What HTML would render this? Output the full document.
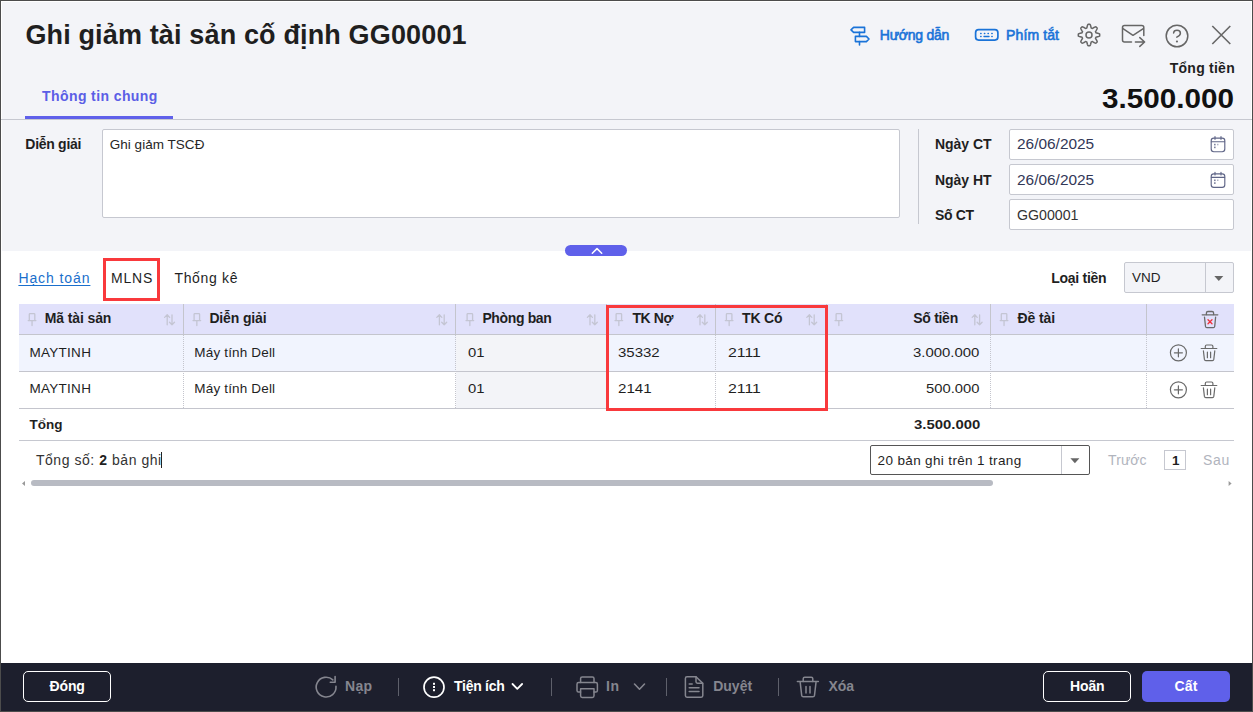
<!DOCTYPE html>
<html><head><meta charset="utf-8"><style>
*{box-sizing:border-box;margin:0;padding:0}
html,body{width:1253px;height:712px;overflow:hidden;background:#fff;font-family:"Liberation Sans",sans-serif}
.a{position:absolute}
.t{position:absolute;white-space:pre}
.t b{font-weight:700;color:#1f1f1f}
</style></head><body>
<div class="a" style="left:0px;top:0px;width:1253px;height:712px;border:1px solid #4c4c4c;"></div><div class="a" style="left:1px;top:1px;width:1251px;height:250px;background:#fff;"></div><div class="a" style="left:2px;top:2px;width:1249px;height:249px;background:#f3f4f8;"></div><div class="a" style="left:1px;top:119px;width:1251px;height:1px;background:#c6c8d0;"></div><div class="a" style="left:25px;top:116px;width:148px;height:3px;background:#5f60ea;"></div><div class="a" style="left:102px;top:129px;width:798px;height:89px;background:#fff;border:1px solid #c6c8d0;border-radius:2px;"></div><div class="a" style="left:918px;top:129px;width:1px;height:95px;background:#c6c8d0;"></div><div class="a" style="left:1009px;top:129px;width:225px;height:31px;background:#fff;border:1px solid #c6c8d0;border-radius:2px;"></div><div class="a" style="left:1009px;top:164px;width:225px;height:31px;background:#fff;border:1px solid #c6c8d0;border-radius:2px;"></div><div class="a" style="left:1009px;top:199px;width:225px;height:31px;background:#fff;border:1px solid #c6c8d0;border-radius:2px;"></div><div class="a" style="left:565px;top:245px;width:62px;height:11px;background:#5f60ea;border-radius:6px;"></div><div class="a" style="left:103px;top:258px;width:57px;height:43px;border:3px solid #f9393c;"></div><div class="a" style="left:1124px;top:262px;width:110px;height:31px;background:#f3f4f8;border:1px solid #c6c8d0;border-radius:2px;"></div><div class="a" style="left:1205px;top:263px;width:1px;height:29px;background:#c6c8d0;"></div><div class="a" style="left:19px;top:304px;width:1215px;height:30px;background:#e1e1fb;"></div><div class="a" style="left:19px;top:334px;width:1215px;height:1px;background:#c4c5cd;"></div><div class="a" style="left:183px;top:304px;width:1px;height:30px;background:#c4c5cd;"></div><div class="a" style="left:455px;top:304px;width:1px;height:30px;background:#c4c5cd;"></div><div class="a" style="left:606px;top:304px;width:1px;height:30px;background:#c4c5cd;"></div><div class="a" style="left:715px;top:304px;width:1px;height:30px;background:#c4c5cd;"></div><div class="a" style="left:826px;top:304px;width:1px;height:30px;background:#c4c5cd;"></div><div class="a" style="left:990px;top:304px;width:1px;height:30px;background:#c4c5cd;"></div><div class="a" style="left:1146px;top:304px;width:1px;height:30px;background:#c4c5cd;"></div><div class="a" style="left:19px;top:335px;width:1215px;height:36px;background:#f1f4fe;"></div><div class="a" style="left:19px;top:371px;width:1215px;height:1px;background:#c4c5cd;"></div><div class="a" style="left:19px;top:372px;width:1215px;height:36px;background:#fff;"></div><div class="a" style="left:19px;top:408px;width:1215px;height:1px;background:#c4c5cd;"></div><div class="a" style="left:456px;top:335px;width:150px;height:36px;background:#f3f4f8;"></div><div class="a" style="left:456px;top:372px;width:150px;height:36px;background:#f3f4f8;"></div><div class="a" style="left:183px;top:335px;width:1px;height:73px;background-image:linear-gradient(to bottom,#c4c5cd 50%,transparent 50%);background-size:1px 2px;"></div><div class="a" style="left:455px;top:335px;width:1px;height:73px;background-image:linear-gradient(to bottom,#c4c5cd 50%,transparent 50%);background-size:1px 2px;"></div><div class="a" style="left:606px;top:335px;width:1px;height:73px;background-image:linear-gradient(to bottom,#c4c5cd 50%,transparent 50%);background-size:1px 2px;"></div><div class="a" style="left:715px;top:335px;width:1px;height:73px;background-image:linear-gradient(to bottom,#c4c5cd 50%,transparent 50%);background-size:1px 2px;"></div><div class="a" style="left:826px;top:335px;width:1px;height:73px;background-image:linear-gradient(to bottom,#c4c5cd 50%,transparent 50%);background-size:1px 2px;"></div><div class="a" style="left:990px;top:335px;width:1px;height:73px;background-image:linear-gradient(to bottom,#c4c5cd 50%,transparent 50%);background-size:1px 2px;"></div><div class="a" style="left:1146px;top:335px;width:1px;height:73px;background-image:linear-gradient(to bottom,#c4c5cd 50%,transparent 50%);background-size:1px 2px;"></div><div class="a" style="left:19px;top:440px;width:1215px;height:1px;background:#c6c8d0;"></div><div class="a" style="left:606px;top:305px;width:222px;height:106px;border:3px solid #f9393c;"></div><div class="a" style="left:870px;top:445px;width:220px;height:30px;background:#fff;border:1px solid #555;border-radius:2px;"></div><div class="a" style="left:1061px;top:446px;width:1px;height:28px;background:#c6c8d0;"></div><div class="a" style="left:1164px;top:450px;width:22px;height:20px;background:#fff;border:1px solid #c6c8d0;"></div><div class="a" style="left:161px;top:452px;width:1px;height:16px;background:#222;"></div><div class="a" style="left:31px;top:480px;width:962px;height:6px;background:#b8bbc3;border-radius:3px;"></div><div class="a" style="left:1px;top:663px;width:1251px;height:48px;background:#1d1f2d;"></div><div class="a" style="left:23px;top:671px;width:88px;height:31px;border:1px solid #fff;border-radius:5px;"></div><div class="a" style="left:1043px;top:671px;width:88px;height:31px;border:1px solid #fff;border-radius:5px;"></div><div class="a" style="left:1142px;top:671px;width:88px;height:31px;background:#5f60ea;border-radius:5px;"></div><div class="a" style="left:398px;top:678px;width:1px;height:18px;background:#5e606b;"></div><div class="a" style="left:551px;top:678px;width:1px;height:18px;background:#5e606b;"></div><div class="a" style="left:666px;top:678px;width:1px;height:18px;background:#5e606b;"></div><div class="a" style="left:778px;top:678px;width:1px;height:18px;background:#5e606b;"></div>
<svg class="a" style="left:0;top:0" width="1253" height="712" viewBox="0 0 1253 712" fill="none" stroke-linecap="round" stroke-linejoin="round">
<!-- signpost -->
<g stroke="#1a73d8" stroke-width="1.6">
<path d="M853.6 27.4 H864.6 V32.4 H853.6 L851 29.9 Z"/>
<path d="M855.4 36.4 H866.4 L869 39 L866.4 41.6 H855.4 Z"/>
<path d="M859.5 32.4 V36.4 M859.5 41.6 V45"/>
</g>
<!-- keyboard -->
<g stroke="#1a73d8">
<rect x="975.6" y="29.7" width="22.3" height="10.4" rx="3" stroke-width="1.7"/>
<g stroke-width="1.4"><path d="M980.7 33.5h.4M984.4 33.5h.4M988 33.5h.4M991.8 33.5h.4M980.7 36.5h.4M991.8 36.5h.4M984 36.5h5"/></g>
</g>
<!-- gear -->
<g stroke="#666666" stroke-width="1.5">
<path d="M1089.00 24.30 L1089.21 24.30 L1089.42 24.31 L1089.63 24.32 L1089.84 24.33 L1090.04 24.43 L1090.22 24.72 L1090.38 25.05 L1090.52 25.41 L1090.65 25.79 L1090.76 26.17 L1090.85 26.56 L1090.94 26.94 L1091.01 27.30 L1091.08 27.64 L1091.14 27.94 L1091.26 28.06 L1091.39 28.10 L1091.53 28.15 L1091.66 28.20 L1091.79 28.26 L1091.93 28.31 L1092.06 28.37 L1092.19 28.43 L1092.31 28.50 L1092.48 28.49 L1092.74 28.32 L1093.02 28.13 L1093.33 27.93 L1093.66 27.72 L1094.00 27.52 L1094.35 27.32 L1094.71 27.15 L1095.06 26.99 L1095.41 26.87 L1095.74 26.79 L1095.95 26.86 L1096.11 27.00 L1096.26 27.14 L1096.42 27.29 L1096.57 27.43 L1096.71 27.58 L1096.86 27.74 L1097.00 27.89 L1097.14 28.05 L1097.21 28.26 L1097.13 28.59 L1097.01 28.94 L1096.85 29.29 L1096.68 29.65 L1096.48 30.00 L1096.28 30.34 L1096.07 30.67 L1095.87 30.98 L1095.68 31.26 L1095.51 31.52 L1095.50 31.69 L1095.57 31.81 L1095.63 31.94 L1095.69 32.07 L1095.74 32.21 L1095.80 32.34 L1095.85 32.47 L1095.90 32.61 L1095.94 32.74 L1096.06 32.86 L1096.36 32.92 L1096.70 32.99 L1097.06 33.06 L1097.44 33.15 L1097.83 33.24 L1098.21 33.35 L1098.59 33.48 L1098.95 33.62 L1099.28 33.78 L1099.57 33.96 L1099.67 34.16 L1099.68 34.37 L1099.69 34.58 L1099.70 34.79 L1099.70 35.00 L1099.70 35.21 L1099.69 35.42 L1099.68 35.63 L1099.67 35.84 L1099.57 36.04 L1099.28 36.22 L1098.95 36.38 L1098.59 36.52 L1098.21 36.65 L1097.83 36.76 L1097.44 36.85 L1097.06 36.94 L1096.70 37.01 L1096.36 37.08 L1096.06 37.14 L1095.94 37.26 L1095.90 37.39 L1095.85 37.53 L1095.80 37.66 L1095.74 37.79 L1095.69 37.93 L1095.63 38.06 L1095.57 38.19 L1095.50 38.31 L1095.51 38.48 L1095.68 38.74 L1095.87 39.02 L1096.07 39.33 L1096.28 39.66 L1096.48 40.00 L1096.68 40.35 L1096.85 40.71 L1097.01 41.06 L1097.13 41.41 L1097.21 41.74 L1097.14 41.95 L1097.00 42.11 L1096.86 42.26 L1096.71 42.42 L1096.57 42.57 L1096.42 42.71 L1096.26 42.86 L1096.11 43.00 L1095.95 43.14 L1095.74 43.21 L1095.41 43.13 L1095.06 43.01 L1094.71 42.85 L1094.35 42.68 L1094.00 42.48 L1093.66 42.28 L1093.33 42.07 L1093.02 41.87 L1092.74 41.68 L1092.48 41.51 L1092.31 41.50 L1092.19 41.57 L1092.06 41.63 L1091.93 41.69 L1091.79 41.74 L1091.66 41.80 L1091.53 41.85 L1091.39 41.90 L1091.26 41.94 L1091.14 42.06 L1091.08 42.36 L1091.01 42.70 L1090.94 43.06 L1090.85 43.44 L1090.76 43.83 L1090.65 44.21 L1090.52 44.59 L1090.38 44.95 L1090.22 45.28 L1090.04 45.57 L1089.84 45.67 L1089.63 45.68 L1089.42 45.69 L1089.21 45.70 L1089.00 45.70 L1088.79 45.70 L1088.58 45.69 L1088.37 45.68 L1088.16 45.67 L1087.96 45.57 L1087.78 45.28 L1087.62 44.95 L1087.48 44.59 L1087.35 44.21 L1087.24 43.83 L1087.15 43.44 L1087.06 43.06 L1086.99 42.70 L1086.92 42.36 L1086.86 42.06 L1086.74 41.94 L1086.61 41.90 L1086.47 41.85 L1086.34 41.80 L1086.21 41.74 L1086.07 41.69 L1085.94 41.63 L1085.81 41.57 L1085.69 41.50 L1085.52 41.51 L1085.26 41.68 L1084.98 41.87 L1084.67 42.07 L1084.34 42.28 L1084.00 42.48 L1083.65 42.68 L1083.29 42.85 L1082.94 43.01 L1082.59 43.13 L1082.26 43.21 L1082.05 43.14 L1081.89 43.00 L1081.74 42.86 L1081.58 42.71 L1081.43 42.57 L1081.29 42.42 L1081.14 42.26 L1081.00 42.11 L1080.86 41.95 L1080.79 41.74 L1080.87 41.41 L1080.99 41.06 L1081.15 40.71 L1081.32 40.35 L1081.52 40.00 L1081.72 39.66 L1081.93 39.33 L1082.13 39.02 L1082.32 38.74 L1082.49 38.48 L1082.50 38.31 L1082.43 38.19 L1082.37 38.06 L1082.31 37.93 L1082.26 37.79 L1082.20 37.66 L1082.15 37.53 L1082.10 37.39 L1082.06 37.26 L1081.94 37.14 L1081.64 37.08 L1081.30 37.01 L1080.94 36.94 L1080.56 36.85 L1080.17 36.76 L1079.79 36.65 L1079.41 36.52 L1079.05 36.38 L1078.72 36.22 L1078.43 36.04 L1078.33 35.84 L1078.32 35.63 L1078.31 35.42 L1078.30 35.21 L1078.30 35.00 L1078.30 34.79 L1078.31 34.58 L1078.32 34.37 L1078.33 34.16 L1078.43 33.96 L1078.72 33.78 L1079.05 33.62 L1079.41 33.48 L1079.79 33.35 L1080.17 33.24 L1080.56 33.15 L1080.94 33.06 L1081.30 32.99 L1081.64 32.92 L1081.94 32.86 L1082.06 32.74 L1082.10 32.61 L1082.15 32.47 L1082.20 32.34 L1082.26 32.21 L1082.31 32.07 L1082.37 31.94 L1082.43 31.81 L1082.50 31.69 L1082.49 31.52 L1082.32 31.26 L1082.13 30.98 L1081.93 30.67 L1081.72 30.34 L1081.52 30.00 L1081.32 29.65 L1081.15 29.29 L1080.99 28.94 L1080.87 28.59 L1080.79 28.26 L1080.86 28.05 L1081.00 27.89 L1081.14 27.74 L1081.29 27.58 L1081.43 27.43 L1081.58 27.29 L1081.74 27.14 L1081.89 27.00 L1082.05 26.86 L1082.26 26.79 L1082.59 26.87 L1082.94 26.99 L1083.29 27.15 L1083.65 27.32 L1084.00 27.52 L1084.34 27.72 L1084.67 27.93 L1084.98 28.13 L1085.26 28.32 L1085.52 28.49 L1085.69 28.50 L1085.81 28.43 L1085.94 28.37 L1086.07 28.31 L1086.21 28.26 L1086.34 28.20 L1086.47 28.15 L1086.61 28.10 L1086.74 28.06 L1086.86 27.94 L1086.92 27.64 L1086.99 27.30 L1087.06 26.94 L1087.15 26.56 L1087.24 26.17 L1087.35 25.79 L1087.48 25.41 L1087.62 25.05 L1087.78 24.72 L1087.96 24.43 L1088.16 24.33 L1088.37 24.32 L1088.58 24.31 L1088.79 24.30 Z"/>
<circle cx="1089" cy="35" r="3.0"/>
</g>
<!-- mail forward -->
<g stroke="#666666" stroke-width="1.5">
<path d="M1131.5 42 H1124.5 Q1122.5 42 1122.5 40 V27.6 Q1122.5 25.6 1124.5 25.6 H1141.8 Q1143.8 25.6 1143.8 27.6 V35.6"/>
<path d="M1123 28.6 L1133 35.3 L1143.3 28.6"/>
<path d="M1135.4 42 H1144.6 M1139.8 37.6 L1144.6 42 L1139.8 46.4"/>
</g>
<!-- help -->
<g stroke="#666666" stroke-width="1.5">
<circle cx="1177" cy="36" r="10.8"/>
<path d="M1173.6 33 Q1173.8 30.3 1177 30.3 Q1180.4 30.3 1180.4 33.2 Q1180.4 35.3 1176.8 37.2"/>
<path d="M1176.8 41.5 h.3" stroke-width="1.8"/>
</g>
<!-- close -->
<g stroke="#666666" stroke-width="1.6" stroke-linecap="butt">
<path d="M1212.3 26 L1230.3 44 M1230.3 26 L1212.3 44"/>
</g>
<!-- calendars -->
<g stroke="#5f6587" stroke-width="1.15">
<rect x="1211.2" y="138.1" width="13.6" height="13.6" rx="2.6"/>
<path d="M1211.4 141.7 H1224.6 M1215 136.5 V139.3 M1221 136.5 V139.3"/>
</g>
<g fill="#5f6587" stroke="none"><rect x="1214.2" y="143.8" width="1.3" height="1.6"/><rect x="1214.2" y="146.6" width="1.3" height="1.6"/><rect x="1217.2" y="143.8" width="1.2" height="1.5" opacity=".6"/></g><g stroke="#5f6587" stroke-width="1.15">
<rect x="1211.2" y="173.79999999999998" width="13.6" height="13.6" rx="2.6"/>
<path d="M1211.4 177.39999999999998 H1224.6 M1215 172.2 V175.0 M1221 172.2 V175.0"/>
</g>
<g fill="#5f6587" stroke="none"><rect x="1214.2" y="179.5" width="1.3" height="1.6"/><rect x="1214.2" y="182.29999999999998" width="1.3" height="1.6"/><rect x="1217.2" y="179.5" width="1.2" height="1.5" opacity=".6"/></g>
<!-- toggle chevron -->
<path d="M592.3 253.3 L597 248.6 L601.7 253.3" stroke="#fff" stroke-width="1.5"/>
<!-- combobox arrows -->
<path d="M1214.3 276 H1223.3 L1218.8 281 Z" fill="#666666" stroke="none"/>
<path d="M1070.4 458.2 H1079.4 L1074.9 463.2 Z" fill="#666666" stroke="none"/>
<!-- header pins / sorts -->
<g stroke="#c4c5d3" stroke-width="1.3"><path d="M29.3 320.4 V314.2 Q29.3 313.6 30.0 313.6 H34.1 Q34.8 313.6 34.8 314.2 V320.4 M28.2 320.6 H35.9 M32.05 320.8 V325.6"/></g><g stroke="#c4c5d3" stroke-width="1.3"><path d="M194.1 320.4 V314.2 Q194.1 313.6 194.8 313.6 H198.9 Q199.6 313.6 199.6 314.2 V320.4 M193 320.6 H200.7 M196.85 320.8 V325.6"/></g><g stroke="#c4c5d3" stroke-width="1.3"><path d="M467.1 320.4 V314.2 Q467.1 313.6 467.8 313.6 H471.9 Q472.6 313.6 472.6 314.2 V320.4 M466 320.6 H473.7 M469.85 320.8 V325.6"/></g><g stroke="#c4c5d3" stroke-width="1.3"><path d="M616.1 320.4 V314.2 Q616.1 313.6 616.8 313.6 H620.9 Q621.6 313.6 621.6 314.2 V320.4 M615 320.6 H622.7 M618.85 320.8 V325.6"/></g><g stroke="#c4c5d3" stroke-width="1.3"><path d="M726.4 320.4 V314.2 Q726.4 313.6 727.0999999999999 313.6 H731.1999999999999 Q731.9 313.6 731.9 314.2 V320.4 M725.3 320.6 H733.0 M729.15 320.8 V325.6"/></g><g stroke="#c4c5d3" stroke-width="1.3"><path d="M836.1 320.4 V314.2 Q836.1 313.6 836.8 313.6 H840.9 Q841.6 313.6 841.6 314.2 V320.4 M835 320.6 H842.7 M838.85 320.8 V325.6"/></g><g stroke="#c4c5d3" stroke-width="1.3"><path d="M1001.3000000000001 320.4 V314.2 Q1001.3000000000001 313.6 1002.0 313.6 H1006.1 Q1006.8000000000001 313.6 1006.8000000000001 314.2 V320.4 M1000.2 320.6 H1007.9000000000001 M1004.0500000000001 320.8 V325.6"/></g><g stroke="#c4c5d3" stroke-width="1.3"><path d="M167.2 314.8 V324.8 M164.6 317.4 L167.2 314.8 L169.6 317.4 M172.0 314.8 V324.8 M169.5 322.2 L172.0 324.8 L174.5 322.2"/></g><g stroke="#c4c5d3" stroke-width="1.3"><path d="M439.40000000000003 314.8 V324.8 M436.8 317.4 L439.40000000000003 314.8 L441.8 317.4 M444.2 314.8 V324.8 M441.7 322.2 L444.2 324.8 L446.7 322.2"/></g><g stroke="#c4c5d3" stroke-width="1.3"><path d="M590.0 314.8 V324.8 M587.4 317.4 L590.0 314.8 L592.4 317.4 M594.8 314.8 V324.8 M592.3 322.2 L594.8 324.8 L597.3 322.2"/></g><g stroke="#c4c5d3" stroke-width="1.3"><path d="M700.0 314.8 V324.8 M697.4 317.4 L700.0 314.8 L702.4 317.4 M704.8 314.8 V324.8 M702.3 322.2 L704.8 324.8 L707.3 322.2"/></g><g stroke="#c4c5d3" stroke-width="1.3"><path d="M809.4 314.8 V324.8 M806.8 317.4 L809.4 314.8 L811.8 317.4 M814.1999999999999 314.8 V324.8 M811.6999999999999 322.2 L814.1999999999999 324.8 L816.6999999999999 322.2"/></g><g stroke="#c4c5d3" stroke-width="1.3"><path d="M974.8000000000001 314.8 V324.8 M972.2 317.4 L974.8000000000001 314.8 L977.2 317.4 M979.6 314.8 V324.8 M977.1 322.2 L979.6 324.8 L982.1 322.2"/></g>
<!-- header trash -->
<g stroke="#6a6a6a" stroke-width="1.3">
<path d="M1202.2 314.8 H1217.8"/>
<path d="M1206.4 314.6 V313 Q1206.4 311.5 1208 311.5 H1212 Q1213.6 311.5 1213.6 313 V314.6"/>
<path d="M1204.5 317.2 L1205.5 326.5 Q1205.7 327.6 1206.8 327.6 H1213.4 Q1214.5 327.6 1214.7 326.5 L1215.6 317.2"/>
</g>
<path d="M1208 319.8 L1212 323.8 M1212 319.8 L1208 323.8" stroke="#f0303a" stroke-width="1.3"/>
<!-- row icons -->
<g stroke="#6a6a6a" stroke-width="1.2">
<circle cx="1178.4" cy="352.8" r="8"/>
<path d="M1174.4 352.8 H1182.4 M1178.4 348.8 V356.8"/>
<path d="M1201.2 348.5 H1216.8"/>
<path d="M1205.3 348.3 V346.40000000000003 Q1205.3 345.0 1206.7 345.0 H1211.5 Q1212.9 345.0 1212.9 346.40000000000003 V348.3"/>
<path d="M1203.4 350.8 L1204.4 359.40000000000003 Q1204.6 360.6 1205.8 360.6 H1212.4 Q1213.6 360.6 1213.8 359.40000000000003 L1214.8 350.8"/>
<path d="M1207.4 352.2 V357.7 M1210.6 352.2 V357.7"/>
</g><g stroke="#6a6a6a" stroke-width="1.2">
<circle cx="1178.4" cy="389.8" r="8"/>
<path d="M1174.4 389.8 H1182.4 M1178.4 385.8 V393.8"/>
<path d="M1201.2 385.5 H1216.8"/>
<path d="M1205.3 385.3 V383.40000000000003 Q1205.3 382.0 1206.7 382.0 H1211.5 Q1212.9 382.0 1212.9 383.40000000000003 V385.3"/>
<path d="M1203.4 387.8 L1204.4 396.40000000000003 Q1204.6 397.6 1205.8 397.6 H1212.4 Q1213.6 397.6 1213.8 396.40000000000003 L1214.8 387.8"/>
<path d="M1207.4 389.2 V394.7 M1210.6 389.2 V394.7"/>
</g>
<!-- scroll arrows -->
<path d="M22 483.4 L25 481 V486 Z" fill="#999" stroke="none"/>
<path d="M1231.6 483.4 L1228.6 481 V486 Z" fill="#999" stroke="none"/>
<!-- pagination select arrow handled above -->
<!-- footer icons -->
<g stroke="#85868f" stroke-width="1.6">
<path d="M332.85 679.86 A9.9 9.9 0 1 0 335.98 686.41"/>
<path d="M335.1 676.6 V682.2 H330.3"/>
</g>
<g stroke="#fff" stroke-width="1.7">
<circle cx="434" cy="687.2" r="10"/>
</g>
<g fill="#fff" stroke="none">
<rect x="433" y="682.8" width="2" height="2"/><rect x="433" y="686" width="2" height="2"/><rect x="433" y="689.2" width="2" height="2"/>
</g>
<path d="M512.5 684 L517.3 688.8 L522.1 684" stroke="#fff" stroke-width="1.8"/>
<g stroke="#85868f" stroke-width="1.5">
<path d="M580.6 682.4 V678.6 Q580.6 677 582.2 677 H592.4 Q594 677 594 678.6 V682.4"/>
<path d="M580.6 692 H578.6 Q577 692 577 690.4 V684.2 Q577 682.6 578.6 682.6 H595.8 Q597.4 682.6 597.4 684.2 V690.4 Q597.4 692 595.8 692 H594"/>
<path d="M580.6 688.8 H594 V695.8 Q594 697.4 592.4 697.4 H582.2 Q580.6 697.4 580.6 695.8 Z"/>
</g>
<path d="M634.5 684 L639.5 689.2 L644.5 684" stroke="#85868f" stroke-width="1.6"/>
<g stroke="#85868f" stroke-width="1.5">
<path d="M696 676.8 H687 Q685.4 676.8 685.4 678.4 V695.6 Q685.4 697.2 687 697.2 H701.2 Q702.8 697.2 702.8 695.6 V683.4 Z"/>
<path d="M696 676.8 V681.8 Q696 683.2 697.4 683.2 H702.6"/>
<path d="M689.2 684 H692.2 M689.2 687.7 H699 M689.2 691.6 H699"/>
</g>
<g stroke="#85868f" stroke-width="1.5">
<path d="M797.4 681.6 H818.4"/>
<path d="M803.2 681.4 V678.8 Q803.2 677.3 804.7 677.3 H811.3 Q812.8 677.3 812.8 678.8 V681.4"/>
<path d="M800.2 682.4 L801.7 695.3 Q801.9 696.8 803.4 696.8 H812.8 Q814.3 696.8 814.5 695.3 L816 682.4"/>
<path d="M806 686.6 V693 M810 686.6 V693"/>
</g>
</svg>
<span id="title" class="t" style="left:25.4px;top:21.54px;font-size:27px;line-height:27px;font-weight:700;color:#1f1f1f;letter-spacing:0.147px;">Ghi giảm tài sản cố định GG00001</span>
<span id="hd" class="t" style="left:879.8px;top:27.85px;font-size:14px;line-height:14px;font-weight:400;color:#1a73d8;letter-spacing:-0.248px;-webkit-text-stroke:0.6px #1a73d8;">Hướng dẫn</span>
<span id="pt" class="t" style="left:1006.1px;top:27.85px;font-size:14px;line-height:14px;font-weight:400;color:#1a73d8;letter-spacing:0.108px;-webkit-text-stroke:0.6px #1a73d8;">Phím tắt</span>
<span id="tt" class="t" style="left:1169.8px;top:61.05px;font-size:14px;line-height:14px;font-weight:700;color:#1f1f1f;letter-spacing:0.237px;">Tổng tiền</span>
<span id="ttv" class="t" style="left:1101.4px;top:84.62px;font-size:27.5px;line-height:27.5px;font-weight:700;color:#111111;transform:scaleX(1.0781);transform-origin:0 0;margin-left:0.9px;">3.500.000</span>
<span id="tab" class="t" style="left:42.1px;top:88.85px;font-size:14px;line-height:14px;font-weight:700;color:#5b5ee6;letter-spacing:0.397px;">Thông tin chung</span>
<span id="dgl" class="t" style="left:25.3px;top:137.15px;font-size:14px;line-height:14px;font-weight:700;color:#1f1f1f;letter-spacing:-0.282px;">Diễn giải</span>
<span id="dgv" class="t" style="left:109.7px;top:138.37px;font-size:13.5px;line-height:13.5px;font-weight:400;color:#262626;letter-spacing:0.035px;">Ghi giảm TSCĐ</span>
<span id="nct" class="t" style="left:935.0px;top:137.15px;font-size:14px;line-height:14px;font-weight:700;color:#1f1f1f;letter-spacing:-0.049px;">Ngày CT</span>
<span id="nht" class="t" style="left:935.0px;top:173.05px;font-size:14px;line-height:14px;font-weight:700;color:#1f1f1f;letter-spacing:-0.049px;">Ngày HT</span>
<span id="sct" class="t" style="left:935.0px;top:207.75px;font-size:14px;line-height:14px;font-weight:700;color:#1f1f1f;letter-spacing:-0.338px;">Số CT</span>
<span id="d1" class="t" style="left:1016.3px;top:137.35px;font-size:14px;line-height:14px;font-weight:400;color:#333857;transform:scaleX(1.1016);transform-origin:0 0;margin-left:0.9px;">26/06/2025</span>
<span id="d2" class="t" style="left:1016.3px;top:172.75px;font-size:14px;line-height:14px;font-weight:400;color:#333857;transform:scaleX(1.1016);transform-origin:0 0;margin-left:0.9px;">26/06/2025</span>
<span id="so" class="t" style="left:1016.3px;top:207.85px;font-size:14px;line-height:14px;font-weight:400;color:#333333;transform:scaleX(1.0129);transform-origin:0 0;margin-left:0.9px;">GG00001</span>
<span id="ht" class="t" style="left:18.4px;top:270.95px;font-size:14px;line-height:14px;font-weight:400;color:#1a6fcc;letter-spacing:0.909px;text-decoration:underline;text-underline-offset:2px;">Hạch toán</span>
<span id="mlns" class="t" style="left:110.9px;top:270.95px;font-size:14px;line-height:14px;font-weight:400;color:#1f1f1f;letter-spacing:0.865px;">MLNS</span>
<span id="tk" class="t" style="left:174.4px;top:270.95px;font-size:14px;line-height:14px;font-weight:400;color:#1f1f1f;letter-spacing:0.689px;">Thống kê</span>
<span id="lt" class="t" style="left:1051.3px;top:270.85px;font-size:14px;line-height:14px;font-weight:700;color:#1f1f1f;letter-spacing:-0.283px;">Loại tiền</span>
<span id="vnd" class="t" style="left:1132.0px;top:271.27px;font-size:13.5px;line-height:13.5px;font-weight:400;color:#1f1f1f;letter-spacing:-0.058px;">VND</span>
<span id="h1" class="t" style="left:44.7px;top:311.35px;font-size:14px;line-height:14px;font-weight:700;color:#1f1f1f;letter-spacing:-0.111px;">Mã tài sản</span>
<span id="h2" class="t" style="left:209.4px;top:311.35px;font-size:14px;line-height:14px;font-weight:700;color:#1f1f1f;letter-spacing:-0.145px;">Diễn giải</span>
<span id="h3" class="t" style="left:482.4px;top:311.35px;font-size:14px;line-height:14px;font-weight:700;color:#1f1f1f;letter-spacing:-0.366px;">Phòng ban</span>
<span id="h4" class="t" style="left:632.4px;top:311.35px;font-size:14px;line-height:14px;font-weight:700;color:#1f1f1f;letter-spacing:-0.406px;">TK Nợ</span>
<span id="h5" class="t" style="left:742.1px;top:311.35px;font-size:14px;line-height:14px;font-weight:700;color:#1f1f1f;letter-spacing:-0.180px;">TK Có</span>
<span id="h6" class="t" style="left:913.2px;top:311.35px;font-size:14px;line-height:14px;font-weight:700;color:#1f1f1f;letter-spacing:-0.279px;">Số tiền</span>
<span id="h7" class="t" style="left:1017.4px;top:311.35px;font-size:14px;line-height:14px;font-weight:700;color:#1f1f1f;letter-spacing:-0.065px;">Đề tài</span>
<span id="r1c1" class="t" style="left:29.5px;top:345.87px;font-size:13.5px;line-height:13.5px;font-weight:400;color:#1f1f1f;letter-spacing:0.275px;">MAYTINH</span>
<span id="r1c2" class="t" style="left:194.3px;top:345.87px;font-size:13.5px;line-height:13.5px;font-weight:400;color:#1f1f1f;letter-spacing:0.168px;">Máy tính Dell</span>
<span id="r1c3" class="t" style="left:467.3px;top:345.87px;font-size:13.5px;line-height:13.5px;font-weight:400;color:#1f1f1f;transform:scaleX(1.0977);transform-origin:0 0;margin-left:0.9px;">01</span>
<span id="r1c4" class="t" style="left:617.1px;top:345.87px;font-size:13.5px;line-height:13.5px;font-weight:400;color:#1f1f1f;transform:scaleX(1.1106);transform-origin:0 0;margin-left:0.9px;">35332</span>
<span id="r1c5" class="t" style="left:726.9px;top:345.87px;font-size:13.5px;line-height:13.5px;font-weight:400;color:#1f1f1f;transform:scaleX(1.1737);transform-origin:0 0;margin-left:0.9px;">2111</span>
<span id="r1c6" class="t" style="left:912.4px;top:345.87px;font-size:13.5px;line-height:13.5px;font-weight:400;color:#1f1f1f;transform:scaleX(1.1055);transform-origin:0 0;margin-left:0.9px;">3.000.000</span>
<span id="r2c1" class="t" style="left:29.5px;top:382.07px;font-size:13.5px;line-height:13.5px;font-weight:400;color:#1f1f1f;letter-spacing:0.275px;">MAYTINH</span>
<span id="r2c2" class="t" style="left:194.3px;top:382.07px;font-size:13.5px;line-height:13.5px;font-weight:400;color:#1f1f1f;letter-spacing:0.168px;">Máy tính Dell</span>
<span id="r2c3" class="t" style="left:467.3px;top:382.07px;font-size:13.5px;line-height:13.5px;font-weight:400;color:#1f1f1f;transform:scaleX(1.0977);transform-origin:0 0;margin-left:0.9px;">01</span>
<span id="r2c4" class="t" style="left:617.1px;top:382.07px;font-size:13.5px;line-height:13.5px;font-weight:400;color:#1f1f1f;transform:scaleX(1.1216);transform-origin:0 0;margin-left:0.9px;">2141</span>
<span id="r2c5" class="t" style="left:726.9px;top:382.07px;font-size:13.5px;line-height:13.5px;font-weight:400;color:#1f1f1f;transform:scaleX(1.1737);transform-origin:0 0;margin-left:0.9px;">2111</span>
<span id="r2c6" class="t" style="left:925.4px;top:382.07px;font-size:13.5px;line-height:13.5px;font-weight:400;color:#1f1f1f;transform:scaleX(1.0940);transform-origin:0 0;margin-left:0.9px;">500.000</span>
<span id="tong" class="t" style="left:29.6px;top:418.27px;font-size:13.5px;line-height:13.5px;font-weight:700;color:#1f1f1f;letter-spacing:-0.067px;">Tổng</span>
<span id="tongv" class="t" style="left:913.4px;top:418.27px;font-size:13.5px;line-height:13.5px;font-weight:700;color:#1f1f1f;transform:scaleX(1.1055);transform-origin:0 0;margin-left:0.9px;">3.500.000</span>
<span id="pg" class="t" style="left:877.6px;top:453.57px;font-size:13.5px;line-height:13.5px;font-weight:400;color:#1f1f1f;letter-spacing:0.352px;">20 bản ghi trên 1 trang</span>
<span id="truoc" class="t" style="left:1108.1px;top:453.15px;font-size:14px;line-height:14px;font-weight:400;color:#b1b4bd;letter-spacing:0.062px;">Trước</span>
<span id="p1" class="t" style="left:1171.9px;top:453.57px;font-size:13.5px;line-height:13.5px;font-weight:700;color:#1f1f1f;letter-spacing:-0.816px;">1</span>
<span id="sau" class="t" style="left:1202.9px;top:453.15px;font-size:14px;line-height:14px;font-weight:400;color:#b1b4bd;letter-spacing:0.689px;">Sau</span>
<span id="dong" class="t" style="left:49.6px;top:679.05px;font-size:14px;line-height:14px;font-weight:700;color:#ffffff;letter-spacing:-0.189px;">Đóng</span>
<span id="nap" class="t" style="left:345.1px;top:678.85px;font-size:14px;line-height:14px;font-weight:700;color:#85868f;letter-spacing:0.223px;">Nạp</span>
<span id="ti" class="t" style="left:454.0px;top:678.85px;font-size:14px;line-height:14px;font-weight:700;color:#ffffff;letter-spacing:-0.265px;">Tiện ích</span>
<span id="in" class="t" style="left:606.0px;top:678.85px;font-size:14px;line-height:14px;font-weight:700;color:#85868f;letter-spacing:0.647px;">In</span>
<span id="duyet" class="t" style="left:713.2px;top:678.85px;font-size:14px;line-height:14px;font-weight:700;color:#85868f;letter-spacing:-0.002px;">Duyệt</span>
<span id="xoa" class="t" style="left:828.6px;top:678.85px;font-size:14px;line-height:14px;font-weight:700;color:#85868f;letter-spacing:-0.144px;">Xóa</span>
<span id="hoan" class="t" style="left:1070.1px;top:678.85px;font-size:14px;line-height:14px;font-weight:700;color:#ffffff;letter-spacing:-0.167px;">Hoãn</span>
<span id="cat" class="t" style="left:1174.6px;top:678.85px;font-size:14px;line-height:14px;font-weight:700;color:#ffffff;letter-spacing:0.169px;">Cất</span>
<span id="tso" class="t" style="left:35.9px;top:453.05px;font-size:14px;line-height:14px;font-weight:400;color:#333333;letter-spacing:0.547px;">Tổng số: <b>2</b> bản ghi</span>
</body></html>
